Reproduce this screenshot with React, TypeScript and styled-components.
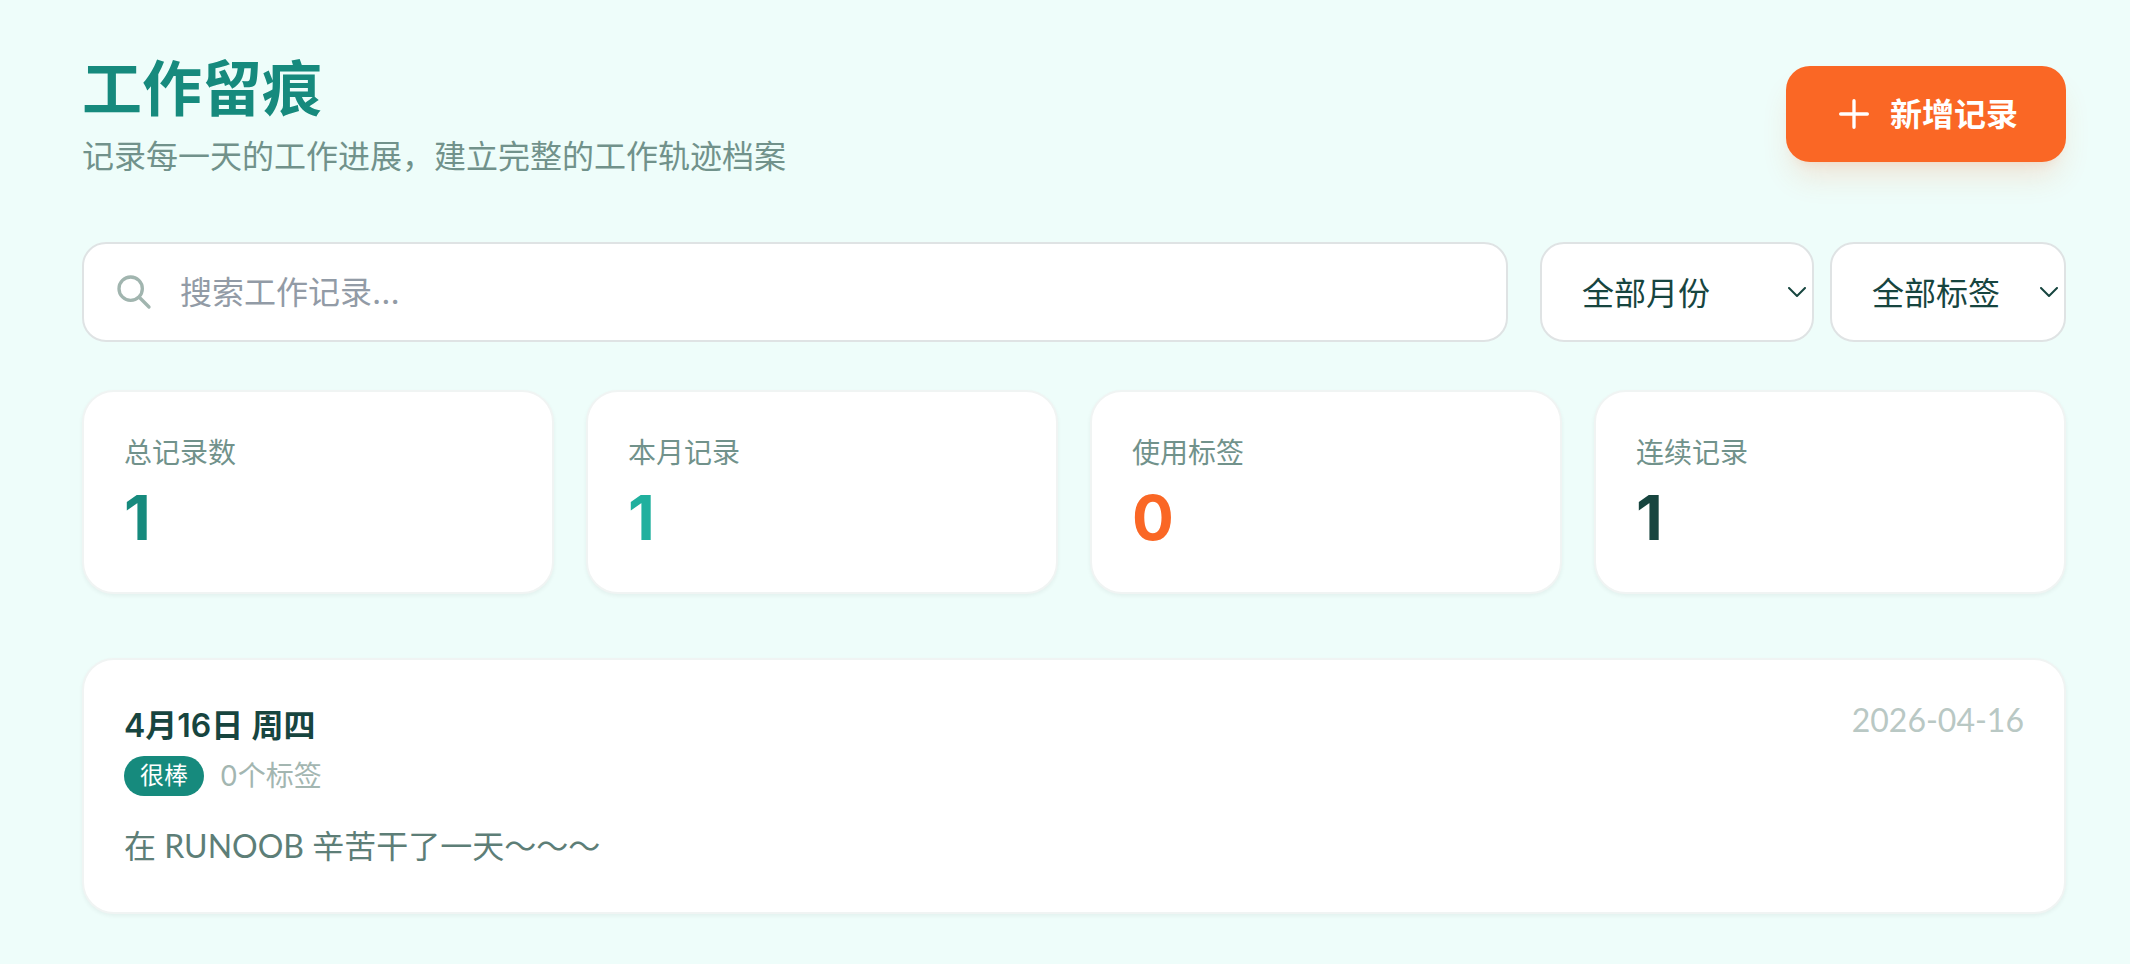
import React from 'react';
import styled, { createGlobalStyle } from 'styled-components';

const GlobalStyle = createGlobalStyle`
  *, *::before, *::after {
    box-sizing: border-box;
  }

  body {
    margin: 0;
    min-height: 100vh;
    background: #eefdfa;
    color: #17453f;
    font-family: Lato, 'Noto Sans CJK SC', sans-serif;
    font-size: 32px;
  }

  button, input, select {
    font: inherit;
  }

  h1, h2, p, dl, dd {
    margin: 0;
  }
`;

const Page = styled.main`
  padding: 50px 64px 50px 82px;
`;

const Header = styled.header`
  display: flex;
  align-items: center;
  justify-content: space-between;
  gap: 32px;
  margin-bottom: 64px;
`;

const Title = styled.h1`
  margin-bottom: 8px;
  color: #168a7d;
  font-size: 60px;
  font-weight: 700;
  line-height: 76px;
`;

const Subtitle = styled.p`
  color: #71928b;
  line-height: 44px;
`;

const AddButton = styled.button`
  display: flex;
  align-items: center;
  flex: none;
  gap: 16px;
  height: 96px;
  padding: 0 48px;
  border: 0;
  border-radius: 24px;
  background: #fa6725;
  box-shadow: 0 20px 30px -6px rgba(250, 103, 37, 0.16), 0 8px 12px -8px rgba(250, 103, 37, 0.16);
  color: #fff;
  font-weight: 700;
  line-height: 48px;
  cursor: pointer;
`;

const Icon = styled.svg`
  display: block;
  flex: none;
  width: 40px;
  height: 40px;
  fill: none;
  stroke: currentColor;
  stroke-width: 2;
  stroke-linecap: round;
  stroke-linejoin: round;
`;

const Filters = styled.form`
  display: flex;
  gap: 16px;
  margin-bottom: 48px;
`;

const SearchBox = styled.label`
  display: flex;
  align-items: center;
  flex: 1;
  gap: 26px;
  height: 100px;
  margin-right: 16px;
  padding: 0 30px;
  border: 2px solid #dfe3e4;
  border-radius: 24px;
  background: #fff;
  color: #a1b5af;
`;

const SearchInput = styled.input`
  flex: 1;
  min-width: 0;
  height: 48px;
  padding: 0;
  border: 0;
  outline: 0;
  background: transparent;
  color: #17453f;
  font-family: Inter, 'Noto Sans CJK SC', sans-serif;

  &::placeholder {
    color: #929ba6;
    opacity: 1;
  }
`;

const SelectBox = styled.div<{ $width: number }>`
  position: relative;
  flex: none;
  width: ${({ $width }) => $width}px;
`;

const Select = styled.select`
  appearance: none;
  width: 100%;
  height: 100px;
  padding: 0 40px;
  border: 2px solid #dfe3e4;
  border-radius: 24px;
  background: #fff;
  color: #17453f;
`;

const Chevron = styled.svg`
  position: absolute;
  top: 45px;
  right: 8px;
  width: 18px;
  height: 12px;
  fill: none;
  stroke: #17453f;
  stroke-width: 2;
  stroke-linecap: round;
  stroke-linejoin: round;
  pointer-events: none;
`;

const Stats = styled.dl`
  display: grid;
  grid-template-columns: repeat(4, 1fr);
  gap: 32px;
  margin-bottom: 64px;
`;

const Card = styled.div`
  padding: 40px;
  border: 2px solid #f0f4f3;
  border-radius: 32px;
  background: #fff;
  box-shadow: 0 2px 4px rgba(0, 0, 0, 0.05);
`;

const StatLabel = styled.dt`
  margin-bottom: 12px;
  color: #71928b;
  font-size: 28px;
  line-height: 40px;
`;

const StatValue = styled.dd<{ $color: string }>`
  color: ${({ $color }) => $color};
  font-family: Inter, sans-serif;
  font-size: 62px;
  font-weight: 700;
  line-height: 68px;
`;

const RecordHead = styled.div`
  display: flex;
  align-items: flex-start;
  justify-content: space-between;
  margin-bottom: 24px;
`;

const RecordTitle = styled.h2`
  margin-bottom: 4px;
  font-family: Inter, 'Noto Sans CJK SC', sans-serif;
  font-size: 32px;
  font-weight: 600;
  line-height: 52px;
`;

const RecordMeta = styled.div`
  display: flex;
  align-items: center;
  gap: 16px;
  height: 40px;
  color: #a3b6b1;
  font-family: Inter, 'Noto Sans CJK SC', sans-serif;
  font-size: 28px;
  line-height: 40px;
`;

const Mood = styled.span`
  padding: 0 16px;
  border-radius: 20px;
  background: #168a7d;
  color: #fff;
  font-size: 24px;
`;

const RecordDate = styled.time`
  color: #b9c8c4;
  line-height: 40px;
`;

const RecordText = styled.p`
  color: #5d7e77;
  line-height: 52px;
`;

const stats = [
  { label: '总记录数', value: 1, color: '#168a7d' },
  { label: '本月记录', value: 1, color: '#20b09e' },
  { label: '使用标签', value: 0, color: '#fa6725' },
  { label: '连续记录', value: 1, color: '#17453f' },
];

const filters = [
  { name: 'month', label: '全部月份', width: 274 },
  { name: 'tag', label: '全部标签', width: 236 },
];

export default function App() {
  return (
    <>
      <GlobalStyle />
      <Page lang="zh-CN">
        <Header>
          <div>
            <Title>工作留痕</Title>
            <Subtitle>记录每一天的工作进展，建立完整的工作轨迹档案</Subtitle>
          </div>
          <AddButton type="button">
            <Icon viewBox="0 0 24 24" aria-hidden="true">
              <path d="M12 4v16m8-8H4" />
            </Icon>
            新增记录
          </AddButton>
        </Header>

        <Filters onSubmit={(e) => e.preventDefault()}>
          <SearchBox>
            <Icon viewBox="0 0 24 24" aria-hidden="true">
              <path d="M21 21l-6-6m2-5a7 7 0 11-14 0 7 7 0 0114 0z" />
            </Icon>
            <SearchInput type="text" placeholder="搜索工作记录..." aria-label="搜索工作记录" />
          </SearchBox>
          {filters.map((f) => (
            <SelectBox key={f.name} $width={f.width}>
              <Select name={f.name} aria-label={f.label}>
                <option>{f.label}</option>
              </Select>
              <Chevron viewBox="0 0 18 12" aria-hidden="true">
                <path d="M1 1l8 8 8-8" />
              </Chevron>
            </SelectBox>
          ))}
        </Filters>

        <Stats>
          {stats.map((s) => (
            <Card key={s.label}>
              <StatLabel>{s.label}</StatLabel>
              <StatValue $color={s.color}>{s.value}</StatValue>
            </Card>
          ))}
        </Stats>

        <Card as="article">
          <RecordHead>
            <div>
              <RecordTitle>4月16日 周四</RecordTitle>
              <RecordMeta>
                <Mood>很棒</Mood>
                <span>0个标签</span>
              </RecordMeta>
            </div>
            <RecordDate dateTime="2026-04-16">2026-04-16</RecordDate>
          </RecordHead>
          <RecordText>在 RUNOOB 辛苦干了一天～～～</RecordText>
        </Card>
      </Page>
    </>
  );
}
